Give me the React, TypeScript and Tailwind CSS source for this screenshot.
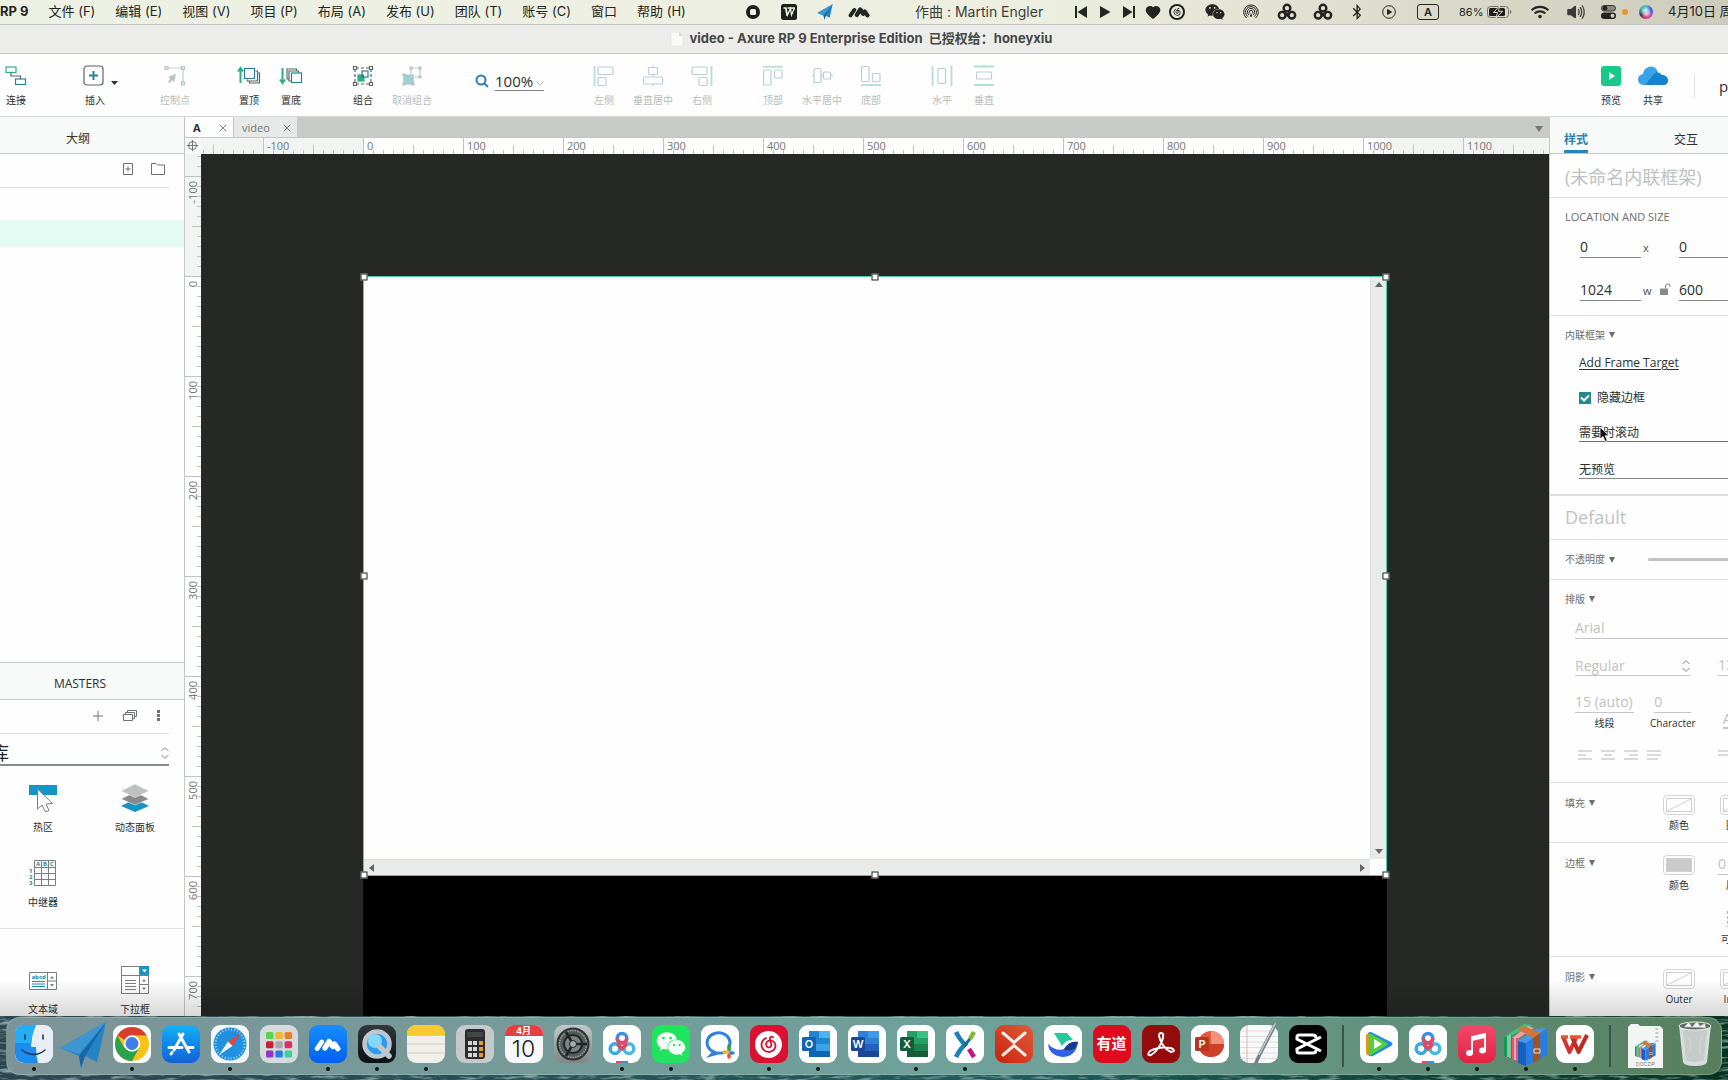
import { useLayoutEffect, useRef, useState } from 'react';
import type { ReactNode } from 'react';
import { Heart, X } from 'lucide-react';
import { FaBluetoothB, FaWeixin, FaWifi } from 'react-icons/fa';
import { IoVolumeHigh } from 'react-icons/io5';
import { SiNeteasecloudmusic } from 'react-icons/si';

const UI = "font-['Open_Sans','Noto_Sans_CJK_SC',sans-serif]";
const SYSTEM = "font-['Inter','Noto_Sans_CJK_SC',sans-serif]";

/* ---------- system menu bar ---------- */

const MENUS = [
  '文件 (F)',
  '编辑 (E)',
  '视图 (V)',
  '项目 (P)',
  '布局 (A)',
  '发布 (U)',
  '团队 (T)',
  '账号 (C)',
  '窗口',
  '帮助 (H)',
];

function PaperPlane({ className }: { className: string }) {
  return (
    <svg viewBox="0 0 48 48" className={className}>
      <path d="M1 27 47 1 38 41 26 35 22 47 20 35Z" fill="#2484c6" />
      <path d="M47 1 20 35 22 47 26 35Z" fill="#1766a5" />
      <path d="M1 27 47 1 20 33Z" fill="#3b96d2" />
    </svg>
  );
}

function Peaks({ className }: { className: string }) {
  return (
    <svg
      viewBox="0 0 26 16"
      className={className}
      fill="none"
      stroke="currentColor"
      strokeWidth="5"
      strokeLinejoin="round"
      strokeLinecap="round"
    >
      <path d="M3 12 7.500 5.500" strokeWidth="4.500" />
      <path d="M10.500 11.500 14.500 5 18 10 19.800 7.500 23 12" />
    </svg>
  );
}

function NetDisk({ className, color }: { className: string; color?: boolean }) {
  return (
    <svg viewBox="0 0 30 28" className={className} fill="none" strokeWidth="3.800" strokeLinecap="round">
      <circle cx="7.500" cy="19" r="5.200" stroke={color ? '#39a9e8' : 'currentColor'} />
      <circle cx="22.500" cy="19" r="5.200" stroke={color ? '#45b8ea' : 'currentColor'} />
      <circle cx="15" cy="8" r="5.200" stroke={color ? '#3c8fe4' : 'currentColor'} />
      <path d="M11 15 15 19 19 15" stroke={color ? '#e6455d' : 'currentColor'} />
      {color && <path d="M10 9a5.200 5.200 0 0 0 10 0" stroke="#e04b6a" />}
    </svg>
  );
}

function Cell({ w = 'w-9', children }: { w?: string; children: ReactNode }) {
  return <span className={`flex shrink-0 items-center justify-center ${w}`}>{children}</span>;
}

function MenuBar() {
  return (
    <header
      className={`flex h-6 shrink-0 items-center overflow-hidden bg-linear-to-r from-[#edf1e3] via-[#eceee0] via-60% to-[#cdccbc] text-[13px] whitespace-nowrap text-[#232521] ${SYSTEM}`}
    >
      <nav className="flex shrink-0 items-center gap-5">
        <button className="font-bold">RP 9</button>
        {MENUS.map(label => (
          <button key={label}>{label}</button>
        ))}
      </nav>
      <div className="flex-1" />
      <div className="flex shrink-0 items-center">
        <Cell>
          <svg viewBox="0 0 14 14" className="size-3.5">
            <circle cx="7" cy="7" r="7" fill="#1d1f1b" />
            <rect x="4" y="4" width="6" height="6" rx="1.500" fill="#eef0e4" />
          </svg>
        </Cell>
        <Cell>
          <svg viewBox="0 0 16 16" className="size-4">
            <rect width="16" height="16" rx="2.500" fill="#1d1f1b" />
            <path d="M2.500 4H5L6.500 11 9.500 4.500 10.500 11 13.500 4M6.500 4H14M4.500 4 6 12" fill="none" stroke="#eef0e4" strokeWidth="1.300" />
          </svg>
        </Cell>
        <Cell>
          <PaperPlane className="size-4" />
        </Cell>
        <Cell w="w-8">
          <Peaks className="h-3.5 w-[22px]" />
        </Cell>
        <span className="ml-10 w-[154px] text-sm text-[#3c3e38]">作曲 : Martin Engler</span>
        <Cell w="w-6">
          <svg viewBox="0 0 12 12" className="size-3" fill="currentColor">
            <path d="M0 0H2V12H0ZM12 0V12L2.500 6Z" />
          </svg>
        </Cell>
        <Cell w="w-6">
          <svg viewBox="0 0 12 12" className="size-3" fill="currentColor">
            <path d="M1 0V12L11.500 6Z" />
          </svg>
        </Cell>
        <Cell w="w-6">
          <svg viewBox="0 0 12 12" className="size-3" fill="currentColor">
            <path d="M12 0H10V12H12ZM0 0V12L9.500 6Z" />
          </svg>
        </Cell>
        <Cell w="w-6">
          <Heart className="size-4" fill="currentColor" />
        </Cell>
        <Cell w="w-6">
          <span className="flex size-4 items-center justify-center rounded-full bg-[#1d1f1b] text-[#e8e8dc]">
            <SiNeteasecloudmusic className="size-3" />
          </span>
        </Cell>
        <span className="w-2" />
        <Cell>
          <FaWeixin className="size-5" />
        </Cell>
        <Cell>
          <svg viewBox="0 0 16 16" className="size-4" fill="none" stroke="currentColor">
            <path d="M3.500 14a7.300 7.300 0 1 1 9 0M4.700 12.500a5.500 5.500 0 1 1 6.600 0M6 11a3.600 3.600 0 1 1 4 0" />
            <path d="M7 9.600a1.800 1.800 0 1 1 2 0" />
            <path d="M8 9.500 6.500 12.500H9.500Z" fill="currentColor" stroke="none" />
          </svg>
        </Cell>
        <Cell>
          <NetDisk className="h-[18px] w-5" />
        </Cell>
        <Cell>
          <NetDisk className="h-[18px] w-5" />
        </Cell>
        <Cell w="w-8">
          <FaBluetoothB className="size-4" />
        </Cell>
        <Cell w="w-8">
          <svg viewBox="0 0 14 14" className="size-3.5" fill="none" stroke="currentColor">
            <circle cx="7" cy="7" r="6.300" />
            <path d="M5.500 4.500V9.500L9.500 7Z" fill="currentColor" />
          </svg>
        </Cell>
        <span className="ml-3 flex h-4 w-[22px] items-center justify-center rounded-[3px] border border-[#232521] text-[11px] font-semibold">
          A
        </span>
        <span className="ml-5 w-7 text-[11px]">86%</span>
        <svg viewBox="0 0 25 12" className="h-3 w-[25px]">
          <rect x=".5" y=".5" width="21" height="11" rx="3" fill="none" stroke="#6d6e66" />
          <rect x="2" y="2" width="16" height="8" rx="1.500" fill="#1d1f1b" />
          <path d="M12.500 0 6.500 6.500H10.500L9 12 15.500 5.300H11.500Z" fill="#1d1f1b" stroke="#dddccd" />
          <path d="M23 4v4q1.500-.5 1.500-2T23 4" fill="#6d6e66" />
        </svg>
        <span className="w-2.5" />
        <Cell>
          <FaWifi className="size-[18px]" />
        </Cell>
        <Cell>
          <IoVolumeHigh className="size-5 text-[#3a3b36]" />
        </Cell>
        <Cell w="w-7">
          <svg viewBox="0 0 15 14" className="h-3.5 w-[15px]">
            <rect x=".5" y=".5" width="14" height="5.500" rx="2.700" fill="#8b8c82" stroke="#33342f" />
            <circle cx="4" cy="3.200" r="2.400" fill="#22231f" />
            <rect x="0" y="7.500" width="15" height="6.500" rx="3.200" fill="#22231f" />
            <circle cx="11.500" cy="10.700" r="2" fill="#d0cfc0" />
          </svg>
        </Cell>
        <span className="size-1.5 rounded-full bg-[#e8962b]" />
        <Cell>
          <span className="size-3.5 rounded-full bg-[conic-gradient(#43c3c9,#3b4fd0,#a94ec2,#e23f7d,#3b2b54,#35b0a8,#43c3c9)] p-[3px]">
            <span className="block size-2 rounded-full bg-white/70 blur-[1px]" />
          </span>
        </Cell>
        <span className="ml-1 w-[60px] shrink-0 overflow-hidden text-[13px]">4月10日 周六</span>
      </div>
    </header>
  );
}

/* ---------- toolbar ---------- */

const DARK = '#5b6865';
const GREEN = '#2fae86';
const BLUE = '#2d7f9c';
const PALE = '#b4dfd4';
const PALE2 = '#b9d0da';

function Tool({
  label,
  w = 'w-[42px]',
  disabled,
  children,
}: {
  label: string;
  w?: string;
  disabled?: boolean;
  children: ReactNode;
}) {
  return (
    <button
      disabled={disabled}
      className={`flex shrink-0 flex-col items-center gap-2 text-[10px] leading-3 whitespace-nowrap ${w} ${disabled ? 'text-[#b9bdba]' : 'text-[#2c302e]'}`}
    >
      <svg viewBox="0 0 20 20" className="h-5 w-5 overflow-visible" fill="none" strokeWidth="1.200">
        {children}
      </svg>
      {label}
    </button>
  );
}

function Toolbar() {
  return (
    <div className={`flex h-[63px] shrink-0 items-center overflow-hidden border-b border-[#d5d9d6] bg-[#fdfefd] pt-0.5 ${UI}`}>
      <Tool label="连接" w="w-8">
        <rect x="0" y="1" width="10" height="5.500" stroke={GREEN} />
        <rect x="9.500" y="13" width="10" height="5.500" stroke={BLUE} />
        <path d="M5 6.500V10H14.500V13" stroke={DARK} />
      </Tool>
      <div className="ml-[35px]">
        <Tool label="插入" w="w-14">
          <rect x="-1" y="0" width="19" height="19" rx="3" stroke={DARK} />
          <path d="M8.500 5V14M4 9.500H13" stroke={BLUE} strokeWidth="2" />
          <path d="M26 15H33L29.500 19Z" fill="#2c302e" />
        </Tool>
      </div>
      <div className="ml-[31px]">
        <Tool label="控制点" disabled>
          <path d="M2 2H18V18" stroke="#c7c9cd" />
          <path d="M0 .5H3V3.500H0ZM16.500.5H19.500V3.500H16.500ZM16.500 16H19.500V19H16.500Z" stroke="#b9c4cc" fill="#e3eaee" />
          <path d="M11 8 3 11 5.500 12.500 3 15.500 4.500 17 7.500 14 9 16.500Z" fill="#b9bfc0" />
        </Tool>
      </div>
      <div className="ml-8 flex">
        <Tool label="置顶">
          <path d="M1.500 17V3M-1 5.500 1.500 2 4 5.500" stroke={GREEN} strokeWidth="2" />
          <rect x="5.500" y="2.500" width="10" height="10" stroke={BLUE} />
          <path d="M16.500 5H18.500V15H8.500V13.500M18.500 7H20.500V17H10.500V15.500" stroke={DARK} />
        </Tool>
        <Tool label="置底">
          <path d="M1.500 2V16M-1 13.500 1.500 17 4 13.500" stroke={GREEN} strokeWidth="2" />
          <path d="M8 13H6V3H15.500V4.500M10 15H8V5H17.500V6.500" stroke={DARK} />
          <rect x="10.500" y="7" width="10" height="9.500" stroke={BLUE} />
        </Tool>
      </div>
      <div className="ml-[30px] flex">
        <Tool label="组合">
          <path d="M3 2H17M3 18H17M2 3V17M18 3V17" stroke={DARK} strokeDasharray="3 2" />
          <path d="M.5.5H3.500V3.500H.5ZM16.500.5H19.500V3.500H16.500ZM.5 16.500H3.500V19.500H.5ZM16.500 16.500H19.500V19.500H16.500Z" stroke={DARK} fill="#fff" />
          <rect x="5" y="9" width="6" height="6" fill={GREEN} stroke={GREEN} />
          <rect x="9" y="5" width="6" height="6" stroke={BLUE} fill="#fff" />
          <path d="M8.500 8.500H11V11.500H8.500Z" fill={BLUE} />
        </Tool>
        <Tool label="取消组合" w="w-14" disabled>
          <path d="M2 9H11V18H2Z" fill="#9fd2cf" stroke="#9fc5cc" />
          <path d="M9 2H18V11H9Z" stroke="#bcd0d5" />
          <path d="M8 1H10V3H8ZM17 1H19V3H17ZM17 10H19V12H17ZM1 8H3V10H1ZM1 17H3V19H1ZM10 17H12V19H10Z" stroke="#b5bfc3" />
        </Tool>
      </div>
      <div className="mb-2.5 ml-[35px] flex h-5 items-center">
        <svg viewBox="0 0 14 14" className="size-3.5" fill="none" stroke="#2b7fb4" strokeWidth="2">
          <circle cx="6" cy="6" r="4.500" />
          <path d="M9.500 9.500 13 13" />
        </svg>
        <label className="ml-1.5 flex h-5 items-center border-b border-[#7f8582]">
          <input aria-label="缩放" defaultValue="100%" className="w-[41px] bg-transparent text-[15px] leading-5 text-[#2c302e] outline-none" />
          <svg viewBox="0 0 8 5" className="mt-1.5 h-[5px] w-2" fill="none" stroke="#b4b8b5">
            <path d="M.5.5 4 4 7.500.5" />
          </svg>
        </label>
      </div>
      <div className="ml-[39px] flex">
        <Tool label="左侧" disabled>
          <path d="M.5 0V20" stroke={PALE} strokeWidth="1.800" />
          <rect x="4" y="1" width="15" height="7.500" rx="1" stroke={PALE2} />
          <rect x="4" y="11.500" width="8" height="8" rx="1" stroke={PALE2} />
        </Tool>
        <Tool label="垂直居中" w="w-14" disabled>
          <path d="M10-.5V1.500M10 8.500V11M10 18V20.500" stroke={PALE} />
          <rect x="5.500" y="1.500" width="9" height="7" rx="1" stroke={PALE2} />
          <rect x=".5" y="11" width="19" height="7" rx="1" stroke={PALE2} />
        </Tool>
        <Tool label="右侧" disabled>
          <path d="M19.500 0V20" stroke={PALE} strokeWidth="1.800" />
          <rect x="0" y="1" width="15" height="7.500" rx="1" stroke={PALE2} />
          <rect x="7" y="11.500" width="8" height="8" rx="1" stroke={PALE2} />
        </Tool>
      </div>
      <div className="ml-[29px] flex">
        <Tool label="顶部" disabled>
          <path d="M0 .7H20" stroke={PALE} strokeWidth="1.800" />
          <rect x=".5" y="4" width="7.500" height="15" rx="1" stroke={PALE2} />
          <rect x="11.500" y="4" width="7.500" height="8" rx="1" stroke={PALE2} />
        </Tool>
        <Tool label="水平居中" w="w-14" disabled>
          <path d="M0 9.500H2M9 9.500H11.500M19 9.500H21" stroke={PALE} strokeWidth="1.500" />
          <rect x="2" y="2.500" width="7" height="14" rx="1" stroke={PALE2} />
          <rect x="11.500" y="6" width="7" height="7" rx="1" stroke={PALE2} />
        </Tool>
        <Tool label="底部" disabled>
          <path d="M0 19H20" stroke={PALE} strokeWidth="1.800" />
          <rect x=".5" y=".5" width="7.500" height="15" rx="1" stroke={PALE2} />
          <rect x="11.500" y="7.500" width="7.500" height="8" rx="1" stroke={PALE2} />
        </Tool>
      </div>
      <div className="ml-[29px] flex">
        <Tool label="水平" disabled>
          <path d="M.5 0V20M19.500 0V20" stroke={PALE} strokeWidth="1.800" />
          <rect x="6" y="2.500" width="7.500" height="15" rx="1" stroke={PALE2} />
        </Tool>
        <Tool label="垂直" disabled>
          <path d="M0 .5H20M0 19H20" stroke={PALE} strokeWidth="1.800" />
          <rect x="2.500" y="6" width="15" height="7" rx="1" stroke={PALE2} />
        </Tool>
      </div>
      <div className="flex-1" />
      <Tool label="预览">
        <rect width="20" height="20" rx="3" fill="#18ca8a" />
        <path d="M8 6V14L14 10Z" fill="#fff" />
      </Tool>
      <Tool label="共享">
        <path d="M0 19Q-5 18-5 13.500T0 8Q1 1 8 .5 14 1 15 7 17 6 19 9 24 9 25 14 25 19 20 19Z" fill="#37a4ea" />
        <path d="M2 19 11 8Q15 4 18 9 24 9 25 14 25 19 20 19Z" fill="#1583cf" />
      </Tool>
      <div className="ml-5 h-6 w-px bg-[#dfe2e0]" />
      <span className="ml-6 w-[9px] overflow-hidden text-[15px] text-[#2c302e]">p</span>
    </div>
  );
}

/* ---------- left column: outline, masters, widget library ---------- */

function StepArrows() {
  return (
    <svg viewBox="0 0 8 12" className="h-3 w-2" fill="none" stroke="#b4b8b5" strokeWidth="1.200">
      <path d="M.5 4 4 .7 7.500 4M.5 8 4 11.300 7.500 8" />
    </svg>
  );
}

function Widget({ label, children }: { label: string; children: ReactNode }) {
  return (
    <li className="flex w-[86px] flex-col items-center gap-2 text-[10px] leading-3.5 text-[#2c302e]">
      <svg viewBox="0 0 28 28" className="size-7" fill="none" stroke="#7a7e7c">
        {children}
      </svg>
      {label}
    </li>
  );
}

function LeftPanel() {
  return (
    <aside className={`flex w-[185px] shrink-0 flex-col overflow-hidden border-r border-[#c4c8c5] bg-[#fdfefd] ${UI}`}>
      <h2 className="flex h-[37px] shrink-0 items-center justify-center border-b border-[#c4c8c5] bg-[#f7faf9] pt-2 pr-7 text-xs text-[#2c302e]">
        大纲
      </h2>
      <div className="mr-[15px] flex h-[34px] shrink-0 items-center justify-end gap-[18px] border-b border-[#dcdfdd] pr-1 pb-1">
        <button aria-label="添加页面">
          <svg viewBox="0 0 10 12" className="h-3 w-2.5" fill="none" stroke="#6e7270">
            <path d="M.5.5H9.500V11.500H.5ZM5 3.500V8.500M2.500 6H7.500" />
          </svg>
        </button>
        <button aria-label="添加文件夹">
          <svg viewBox="0 0 14 12" className="h-3 w-3.5" fill="none" stroke="#6e7270">
            <path d="M.5.5H5L6.500 2H13.500V11.500H.5Z" />
          </svg>
        </button>
      </div>
      <div className="mt-8 h-[27px] shrink-0 bg-[#e4fbf3]" />
      <div className="flex-1" />

      <h2 className="flex h-[38px] shrink-0 items-center justify-center border-y border-[#c4c8c5] bg-[#f7faf9] pt-1.5 pr-6 text-xs text-[#2c302e]">
        MASTERS
      </h2>
      <div className="mr-[15px] flex h-[34px] shrink-0 items-center justify-end gap-5 border-b border-[#dcdfdd] pr-[9px] pb-0.5">
        <button aria-label="添加母版">
          <svg viewBox="0 0 10 10" className="size-2.5" stroke="#6e7270">
            <path d="M0 5H10M5 0V10" />
          </svg>
        </button>
        <button aria-label="母版分组">
          <svg viewBox="0 0 14 11" className="h-[11px] w-3.5" fill="none" stroke="#6e7270">
            <path d="M.5 4.500H9.500V10.500H.5ZM2.500 4.500V2.500H11.500V8.500H9.500M4.500 2.500V.5H13.500V6.500H11.500" />
          </svg>
        </button>
        <button aria-label="更多">
          <svg viewBox="0 0 3 11" className="h-[11px] w-[3px]" fill="#6e7270">
            <path d="M0 0H3V3H0ZM0 4H3V7H0ZM0 8H3V11H0Z" />
          </svg>
        </button>
      </div>
      <label className="mr-[15px] flex h-8 shrink-0 items-center border-b-2 border-[#868a88] pt-2">
        <select aria-label="元件库" className="-ml-[9px] flex-1 appearance-none bg-transparent text-lg leading-6 text-[#1f2221] outline-none">
          <option>库</option>
        </select>
        <StepArrows />
      </label>

      <ul className="flex shrink-0 flex-wrap gap-x-1.5 gap-y-[25px] border-b border-[#dcdfdd] pt-[18px] pb-[19px]">
        <Widget label="热区">
          <path d="M0 1H28V11H0Z" fill="#1793c5" stroke="none" />
          <path d="M8.500 5V25L13 21 16.500 28 20 26.500 17 20 23.500 19.500Z" fill="#fff" />
        </Widget>
        <Widget label="动态面板">
          <path d="M14 15 28 22 14 28 0 22Z" fill="#1793c5" stroke="none" />
          <path d="M14 8 28 15 14 21 0 15Z" fill="#868988" stroke="#fdfefd" strokeWidth=".5" />
          <path d="M14 0 28 7 14 13.500 0 7Z" fill="#bfc1c0" stroke="#fdfefd" strokeWidth=".5" />
        </Widget>
        <Widget label="中继器">
          <path d="M5.500 1.500H26.500V26.500H5.500ZM5.500 8.500H26.500M5.500 14.500H26.500M5.500 20.500H26.500M12.500 1.500V26.500M19.500 1.500V26.500" />
          <g fill="#1c86a8" stroke="none" className="text-[6px] font-bold">
            <text x="7" y="7">A</text>
            <text x="14" y="7">B</text>
            <text x="21" y="7">C</text>
            <text x="0" y="14">1</text>
            <text x="0" y="20">2</text>
            <text x="0" y="26">3</text>
          </g>
        </Widget>
      </ul>
      <ul className="flex shrink-0 flex-wrap gap-x-1.5 pt-[37px]">
        <Widget label="文本域">
          <path d="M.5 6.500H27.500V23.500H.5ZM18.500 6.500V23.500M18.500 15H27.500" />
          <path d="M3 15.500H16M3 18H16M3 20.500H16" stroke="#1793c5" />
          <path d="M21 12.500 23 10 25 12.500ZM21 18 23 20.500 25 18Z" fill="#7a7e7c" stroke="none" />
          <text x="2.500" y="13" fill="#1c86a8" stroke="none" className="text-[6px] font-bold">
            abcd
          </text>
        </Widget>
        <Widget label="下拉框">
          <path d="M.5.5H27.500V27.500H.5ZM.5 9.500H27.500M18.500.5V27.500M18.500 18.500H27.500M4 14.500H15M4 17.500H15M4 20.500H15M4 23.500H15" />
          <path d="M19 0H28V9H19Z" fill="#1793c5" stroke="none" />
          <path d="M21 3.500H26L23.500 6.500Z" fill="#fff" stroke="none" />
          <path d="M21 15.500 23 13 25 15.500ZM21 21.500 23 24 25 21.500Z" fill="#7a7e7c" stroke="none" />
        </Widget>
      </ul>
    </aside>
  );
}

/* ---------- rulers and canvas ---------- */

// canvas origin measured from the corner where the two rulers meet
const ORIGIN_X = 162;
const ORIGIN_Y = 122;
const PAGE_W = 1024;
const FRAME_H = 600;

// room a label needs past its tick
const LABEL_ROOM = 36;

/** Pixel size of an svg, so that a ruler only draws the marks it has room for. */
function useSvgSize() {
  const ref = useRef<SVGSVGElement>(null);
  const [size, setSize] = useState({ width: 0, height: 0 });

  useLayoutEffect(() => {
    const node = ref.current;
    if (!node) return;
    const measure = () => {
      const box = node.getBoundingClientRect();
      setSize({ width: box.width, height: box.height });
    };
    measure();
    const observer = new ResizeObserver(measure);
    observer.observe(node);
    return () => observer.disconnect();
  }, []);

  return { ref, ...size };
}

function ticks(from: number, to: number) {
  const list: number[] = [];
  for (let n = from; n <= to; n += 10) list.push(n);
  return list;
}

function tickStart(n: number) {
  if (n % 100 === 0) return 0;
  return n % 50 === 0 ? 7 : 12;
}

function TopRuler() {
  const { ref, width } = useSvgSize();
  const end = width - ORIGIN_X;

  return (
    <svg ref={ref} className="h-4 min-w-0 flex-1 bg-[#f1f4f2]">
      <rect x={ORIGIN_X} width={PAGE_W} height="16" fill="#fdfefd" />
      {ticks(-160, end).map(n => (
        <g key={n}>
          <path d={`M${ORIGIN_X + n + 0.5} ${tickStart(n)}V16`} stroke="#bfc3c0" />
          {n % 100 === 0 && n + LABEL_ROOM < end && (
            <text x={ORIGIN_X + n + 4} y="12" fill="#737775" className="text-[11px]">
              {n}
            </text>
          )}
        </g>
      ))}
    </svg>
  );
}

function SideRuler() {
  const { ref, height } = useSvgSize();
  const end = height - ORIGIN_Y;

  return (
    <svg ref={ref} className="w-4 shrink-0 bg-[#f1f4f2]">
      <rect y={ORIGIN_Y} width="16" height="100%" fill="#fdfefd" />
      {ticks(-120, end).map(n => (
        <g key={n}>
          <path d={`M${tickStart(n)} ${ORIGIN_Y + n + 0.5}H16`} stroke="#bfc3c0" />
          {n % 100 === 0 && n + LABEL_ROOM < end && (
            <text
              textAnchor="end"
              transform={`translate(12 ${ORIGIN_Y + n + 5}) rotate(-90)`}
              fill="#737775"
              className="text-[11px]"
            >
              {n}
            </text>
          )}
        </g>
      ))}
    </svg>
  );
}

const HANDLES = [
  'left-0 top-0',
  'left-1/2 top-0',
  'left-full top-0',
  'left-0 top-1/2',
  'left-full top-1/2',
  'left-0 top-full',
  'left-1/2 top-full',
  'left-full top-full',
];

function Triangle({ d }: { d: string }) {
  return (
    <svg viewBox="0 0 10 10" className="size-2.5" fill="#626664">
      <path d={d} />
    </svg>
  );
}

function Canvas() {
  return (
    <div className="relative min-w-0 flex-1 overflow-hidden bg-[#262826]">
      <div className="absolute top-[122px] bottom-0 left-[162px] w-[1024px] bg-black" />
      <div
        className="absolute top-[122px] left-[162px] border border-[#4cc9b1] bg-[#fdfefd]"
        style={{ width: PAGE_W, height: FRAME_H }}
      >
        <div className="flex h-full flex-col">
          <div className="flex flex-1">
            <div className="flex-1" />
            <div className="flex w-4 flex-col items-center justify-between border-l border-[#dadddb] bg-[#e9ebe9] py-0.5">
              <Triangle d="M1 8 5 3 9 8Z" />
              <Triangle d="M1 2H9L5 7Z" />
            </div>
          </div>
          <div className="flex h-4">
            <div className="flex flex-1 items-center justify-between border-t border-[#dadddb] bg-[#e9ebe9] px-0.5">
              <Triangle d="M8 1V9L3 5Z" />
              <Triangle d="M2 1V9L7 5Z" />
            </div>
            <div className="w-4" />
          </div>
        </div>
        {HANDLES.map(pos => (
          <span key={pos} className={`absolute size-[7px] -translate-1/2 border border-[#222] bg-white ${pos}`} />
        ))}
      </div>
    </div>
  );
}

function Workspace() {
  return (
    <main className={`flex min-w-0 flex-1 flex-col ${UI}`}>
      <div className="flex h-5 shrink-0 items-stretch bg-[#c8cac8] text-[11px]">
        <div className="flex w-[49px] items-center justify-between border-r border-[#c4c8c5] bg-[#fdfefd] pt-0.5 pr-1 pl-2">
          <button className="font-bold text-[#2c302e]">A</button>
          <button aria-label="关闭 A">
            <X className="size-3 text-[#555957]" strokeWidth={1.5} />
          </button>
        </div>
        <div className="flex w-[63px] items-center justify-between bg-[#e6e9e7] pt-0.5 pr-1 pl-2 text-[#737775]">
          <button>video</button>
          <button aria-label="关闭 video">
            <X className="size-3 text-[#555957]" strokeWidth={1.5} />
          </button>
        </div>
        <button aria-label="所有标签" className="ml-auto pr-1.5">
          <svg viewBox="0 0 8 6" className="mt-1 h-1.5 w-2">
            <path d="M0 0H8L4 6Z" fill="#737775" />
          </svg>
        </button>
      </div>
      <div className="flex h-[17px] shrink-0 border-t border-[#c4c8c5]">
        <svg viewBox="0 0 16 16" className="size-4 shrink-0 bg-[#f7faf9]" fill="none" stroke="#737775">
          <circle cx="7.500" cy="7.500" r="4" />
          <path d="M7.500 2V13M2 7.500H13" />
        </svg>
        <TopRuler />
      </div>
      <div className="flex min-h-0 flex-1">
        <SideRuler />
        <Canvas />
      </div>
    </main>
  );
}

/* ---------- right column: style inspector ---------- */

function SectionTitle({ children }: { children: ReactNode }) {
  return (
    <h3 className="flex h-4 shrink-0 items-center gap-1 text-[10px] whitespace-nowrap text-[#6b6f6d]">
      {children}
      <svg viewBox="0 0 6 6" className="size-1.5" fill="#6b6f6d">
        <path d="M0 0H6L3 6Z" />
      </svg>
    </h3>
  );
}

function Field({ label, value, w, muted }: { label: string; value: string; w: string; muted?: boolean }) {
  return (
    <input
      aria-label={label}
      defaultValue={value}
      className={`h-5 shrink-0 border-b bg-transparent pb-0.5 text-sm outline-none ${w} ${muted ? 'border-[#c4c7c5] text-[#c0c3c1]' : 'border-[#868a88] text-[#2c302e]'}`}
    />
  );
}

function Swatch({ label, filled }: { label: string; filled?: boolean }) {
  return (
    <button className="flex h-10 w-8 shrink-0 flex-col items-center gap-[3px] text-[10px] leading-3.5 text-[#2c302e]">
      <span className="flex h-5 w-8 items-center justify-center rounded-sm border border-[#d3d6d4]">
        <svg viewBox="0 0 26 14" className="h-3.5 w-[26px]" stroke="#cfd1d0" fill={filled ? '#c9cac9' : 'none'}>
          <rect x=".5" y=".5" width="25" height="13" />
          {!filled && <path d="M1 13 25 1" />}
        </svg>
      </span>
      {label}
    </button>
  );
}

const ALIGNMENTS = [
  { label: '左对齐', d: 'M0 1H14M0 5H8M0 9H14' },
  { label: '居中', d: 'M0 1H14M3 5H11M0 9H14' },
  { label: '右对齐', d: 'M0 1H14M5 5H14M0 9H14' },
  { label: '两端对齐', d: 'M0 1H14M0 5H14M0 9H11' },
];

function RightPanel() {
  return (
    <aside className={`relative w-[179px] shrink-0 overflow-hidden border-l border-[#c4c8c5] bg-[#fdfefd] ${UI}`}>
      <div className="flex h-[37px] w-[240px] items-end border-b border-[#c4c8c5] bg-[#f7faf9] pl-3.5 text-xs text-[#2c302e]">
        <button className="border-b-3 border-[#2b83b4] pb-0.5 font-bold text-[#2b83b4]">样式</button>
        <button className="ml-[86px] pb-[5px]">交互</button>
      </div>
      <div className="flex h-11 w-[240px] items-center border-b border-[#dcdfdd] pt-0.5 pl-[15px]">
        <input aria-label="名称" placeholder="(未命名内联框架)" className="w-full bg-transparent text-lg outline-none placeholder:text-[#c0c3c1]" />
      </div>

      <section className="w-[240px] border-b border-[#dcdfdd] pt-[11px] pb-3.5 pl-[15px]">
        <h3 className="text-[11px] leading-4 text-[#6b6f6d]">LOCATION AND SIZE</h3>
        <div className="mt-[13px] flex pl-[15px]">
          <Field label="x" value="0" w="w-[61px]" />
          <span className="w-[38px] pl-0.5 text-[11px] leading-5 text-[#4a4e4c]">x</span>
          <Field label="y" value="0" w="w-[61px]" />
        </div>
        <div className="mt-[23px] flex pl-[15px]">
          <Field label="w" value="1024" w="w-[61px]" />
          <span className="flex w-[38px] items-center gap-2 pl-0.5 text-[11px] leading-5 text-[#4a4e4c]">
            w
            <svg viewBox="0 0 11 12" className="mb-1 h-3 w-[11px]">
              <path d="M0 5.500H8V12H0Z" fill="#868a88" />
              <path d="M5.500 5.500V3Q5.500 1 7.800 1T10 3V4" fill="none" stroke="#868a88" />
            </svg>
          </span>
          <Field label="h" value="600" w="w-[61px]" />
        </div>
      </section>

      <section className="w-[240px] border-b-2 border-[#dcdfdd] pt-[11px] pb-[15px] pl-[15px]">
        <SectionTitle>内联框架</SectionTitle>
        <div className="flex flex-col items-start pl-3.5 text-xs text-[#2c302e]">
          <a href="#target" className="mt-2.5 leading-5 underline underline-offset-2">
            Add Frame Target
          </a>
          <label className="mt-[15px] flex h-5 items-center gap-1.5">
            <span className="grid size-3">
              <input type="checkbox" defaultChecked className="col-start-1 row-start-1 size-3 appearance-none bg-[#23898c]" />
              <svg viewBox="0 0 12 12" className="pointer-events-none col-start-1 row-start-1 size-3" fill="none" stroke="#fff" strokeWidth="2">
                <path d="M2 5.500 5 8.500 10 3.500" />
              </svg>
            </span>
            隐藏边框
          </label>
          <select aria-label="滚动条" className="mt-3.5 h-5 w-full appearance-none border-b border-[#3b7f9b] bg-transparent pt-0.5 outline-none">
            <option>需要时滚动</option>
          </select>
          <select aria-label="预览图" className="mt-[17px] h-5 w-full appearance-none border-b border-[#868a88] bg-transparent pt-0.5 outline-none">
            <option>无预览</option>
          </select>
        </div>
      </section>

      <div className="flex h-11 w-[240px] items-center border-b border-[#dcdfdd] pb-0.5 pl-[15px]">
        <select aria-label="样式" className="w-full appearance-none bg-transparent text-lg text-[#c0c3c1] outline-none">
          <option>Default</option>
        </select>
      </div>
      <section className="flex h-10 w-[240px] items-center border-b border-[#dcdfdd] pl-[15px]">
        <SectionTitle>不透明度</SectionTitle>
        <input
          type="range"
          aria-label="不透明度"
          defaultValue="100"
          className="ml-[33px] h-[3px] w-32 appearance-none rounded-full bg-[#c0c3c1]"
        />
      </section>

      <section className="h-[203px] w-[240px] border-b border-[#dcdfdd] pt-[11px] pl-[15px]">
        <SectionTitle>排版</SectionTitle>
        <div className="mt-3 flex pl-2.5">
          <Field label="字体" value="Arial" w="w-[200px]" muted />
        </div>
        <div className="mt-[17px] flex pl-2.5">
          <label className="flex h-5 w-[115px] items-center border-b border-[#c4c7c5]">
            <select aria-label="字形" className="flex-1 appearance-none bg-transparent text-sm leading-5 text-[#c0c3c1] outline-none">
              <option>Regular</option>
            </select>
            <StepArrows />
          </label>
          <span className="w-7" />
          <Field label="字号" value="13" w="w-12" muted />
        </div>
        <div className="mt-[17px] flex pl-2.5">
          <label className="flex flex-col items-center text-[10px] leading-5 text-[#2c302e]">
            <Field label="线段" value="15 (auto)" w="w-[59px]" muted />
            线段
          </label>
          <label className="ml-4 flex flex-col items-center text-[10px] leading-5 text-[#2c302e]">
            <Field label="Character" value="0" w="w-[37px]" muted />
            Character
          </label>
          <button className="mt-4 ml-[27px] h-5 border-b-2 border-[#c4c7c5] text-sm leading-5 text-[#c0c3c1]">A</button>
        </div>
        <div className="mt-[17px] flex gap-[9px] pl-[13px]">
          {ALIGNMENTS.map(({ label, d }) => (
            <button key={label} aria-label={label}>
              <svg viewBox="0 0 14 10" className="h-2.5 w-3.5" stroke="#cdd0ce" strokeWidth="1.500">
                <path d={d} />
              </svg>
            </button>
          ))}
          <button aria-label="顶端对齐" className="ml-12">
            <svg viewBox="0 0 14 10" className="h-2.5 w-3.5" stroke="#cdd0ce" strokeWidth="1.500">
              <path d="M0 1H14M0 5H14" />
            </svg>
          </button>
        </div>
      </section>

      <section className="flex h-[60px] w-[260px] border-b border-[#dcdfdd] pt-3 pl-[15px]">
        <div className="w-[98px]">
          <SectionTitle>填充</SectionTitle>
        </div>
        <Swatch label="颜色" />
        <span className="w-[25px]" />
        <Swatch label="图片" />
      </section>
      <section className="flex h-[114px] w-[260px] border-b border-[#dcdfdd] pt-3 pl-[15px]">
        <div className="w-[98px]">
          <SectionTitle>边框</SectionTitle>
        </div>
        <Swatch label="颜色" filled />
        <div className="ml-[23px] flex w-9 flex-col items-center text-[10px] leading-5 text-[#2c302e]">
          <Field label="厚度" value="0" w="w-9" muted />
          <span>厚度</span>
          <svg viewBox="0 0 18 16" className="mt-4 h-4 w-[18px] shrink-0" stroke="#b4b8b5" strokeWidth="2" strokeDasharray="3 2">
            <path d="M1 0V16M0 1H18" />
          </svg>
          <span className="mt-0.5 whitespace-nowrap">可见性</span>
        </div>
      </section>
      <section className="flex w-[260px] pt-3 pl-[15px]">
        <div className="w-[98px]">
          <SectionTitle>阴影</SectionTitle>
        </div>
        <Swatch label="Outer" />
        <span className="w-[25px]" />
        <Swatch label="Inner" />
      </section>

      {/* mouse pointer */}
      <svg viewBox="0 0 11 17" className="absolute top-[309px] left-[49px] h-[17px] w-[11px]">
        <path d="M1 1V13L4 10.500 6 15.500 8.300 14.500 6.300 9.700H10Z" fill="#111" stroke="#fff" strokeWidth=".8" />
      </svg>
    </aside>
  );
}

/* ---------- dock ---------- */

function Tile({ bg, running, children }: { bg: string; running?: boolean; children: ReactNode }) {
  return (
    <button className="flex w-[49px] shrink-0 flex-col items-center gap-1">
      <span className={`flex size-[38px] items-center justify-center overflow-hidden rounded-[9px] ${bg}`}>{children}</span>
      <span className={`size-1 rounded-full ${running ? 'bg-[#0d1615]' : ''}`} />
    </button>
  );
}

function Art({ children }: { children: ReactNode }) {
  return (
    <svg viewBox="0 0 38 38" className="size-[38px] overflow-visible" fill="none">
      {children}
    </svg>
  );
}

function OfficeIcon({ letter, tones }: { letter: string; tones: string[] }) {
  return (
    <Art>
      <path d="M10 6H31V32H10Z" fill={tones[0]} />
      <path d="M20 6H31V13H20Z" fill={tones[1]} />
      <path d="M10 19H31V32H10Z" fill={tones[2]} />
      <path d="M10 26H31V32H10Z" fill={tones[3]} />
      <rect x="3" y="12" width="14" height="14" rx="1.500" fill={tones[3]} />
      <text x="10" y="23" textAnchor="middle" fill="#fff" className="text-[11px] font-semibold">
        {letter}
      </text>
    </Art>
  );
}

function Books() {
  return (
    <>
      <path d="M0 12 8 8V34L0 31Z" fill="#139a54" />
      <path d="M0 12 20-1 29 0 8 10Z" fill="#3cc47c" />
      <path d="M8 14 15 10V37L8 34Z" fill="#e0596f" />
      <path d="M8 13 24 1 30 3 15 13Z" fill="#f0a0ad" />
      <path d="M14 16 22 18V41L14 38Z" fill="#1560c0" />
      <path d="M14 16 32 4 43 3 22 18Z" fill="#4a97ee" />
      <path d="M22 18 43 4V30L22 41Z" fill="#2a7de0" />
      <path d="M29 13 36 8V34L29 38Z" fill="#a4501f" />
      <path d="M13 4 20 1 36 8 29 13Z" fill="#d0763a" />
      <path d="M30 24H36V28H30Z" stroke="#f5e2c8" />
      <path d="M4 11V32M6 10V33M11 13V35" stroke="#eef2ee" />
    </>
  );
}

function DockDivider() {
  return <span className="mx-[10px] h-[42px] w-0.5 shrink-0 bg-[#3a544c]" />;
}

function Dock() {
  return (
    <footer
      className={`relative mx-1.5 mt-px mb-[5px] flex h-[58px] shrink-0 items-start justify-center overflow-hidden rounded-[14px] border border-white/20 bg-linear-to-r from-[#7c9498] via-[#6da19a] via-60% to-[#577f5e] pt-[7px] ${SYSTEM}`}
    >
      <Tile bg="bg-white" running>
        <Art>
          <path d="M0 0H38V38H0Z" fill="#e9edf5" />
          <path d="M0 0H21Q16 10 16 22H21Q21 31 23 38H0Z" fill="#1c8df0" />
          <path d="M0 0H21Q17 8 16.500 18H0Z" fill="#25aef6" />
          <path d="M10 10V14M28 10V14M7 25Q19 34 30 25" stroke="#16304a" strokeWidth="1.500" strokeLinecap="round" />
        </Art>
      </Tile>
      <button aria-label="Telegram" className="-mt-1 flex w-[49px] shrink-0 justify-center">
        <PaperPlane className="size-12" />
      </button>
      <Tile bg="bg-white" running>
        <Art>
          <circle cx="19" cy="19" r="17" fill="#fbc116" />
          <path d="M19 19 4.300 10.500A17 17 0 0 1 33.700 10.500H19Z" fill="#dd3b2e" />
          <path d="M4.300 10.500A17 17 0 0 0 19 36L26 23 19 19 11.500 23Z" fill="#2ba24c" />
          <circle cx="19" cy="18.500" r="8.200" fill="#fff" />
          <circle cx="19" cy="18.500" r="6.500" fill="#3f7fe8" />
        </Art>
      </Tile>
      <Tile bg="bg-linear-to-b from-[#1ab0f4] to-[#1560dc]">
        <Art>
          <path d="M21 9 12 25M17 9 27 27M7 22.500H20M25 22.500H31M10 27.500 9 29" stroke="#f4f9ff" strokeWidth="3" strokeLinecap="round" />
        </Art>
      </Tile>
      <Tile bg="bg-[#f4f6f7]" running>
        <Art>
          <circle cx="19" cy="19" r="16.500" fill="#2190e0" />
          <circle cx="19" cy="19" r="14.500" stroke="#a9d6f5" strokeDasharray="1 2" strokeWidth="2" />
          <path d="M30 8 21.500 21 17 16.500Z" fill="#e2463c" />
          <path d="M8 30 17 16.500 21.500 21Z" fill="#f3f5f7" />
        </Art>
      </Tile>
      <Tile bg="bg-[#d5dbdc]">
        <Art>
          {['#56d34f', '#f3b62c', '#e88224', '#c8202e', '#a9a9a9', '#e12d66', '#9535c9', '#2a7ce0', '#3fcf9c'].map((fill, i) => (
            <rect key={fill} x={6 + (i % 3) * 9.3} y={7 + Math.floor(i / 3) * 9.3} width="7.500" height="7" rx="1.500" fill={fill} />
          ))}
        </Art>
      </Tile>
      <Tile bg="bg-linear-to-b from-[#1b8dfc] to-[#0360f0] text-white" running>
        <Peaks className="h-[17px] w-[27px]" />
      </Tile>
      <Tile bg="bg-linear-to-b from-[#33393e] to-[#0e1114]" running>
        <Art>
          <circle cx="19" cy="19" r="12.500" fill="#2b9af0" stroke="#bcc7ce" strokeWidth="4.500" />
          <circle cx="17" cy="16" r="7" fill="#7fd9fb" />
          <path d="M21 21 31 31" stroke="#bcc7ce" strokeWidth="5.500" strokeLinecap="round" />
        </Art>
      </Tile>
      <Tile bg="bg-[#f1efe9]" running>
        <Art>
          <path d="M0 0H38V10H0Z" fill="#f7cb2e" />
          <path d="M0 10.500H38M0 19H38M0 28H38" stroke="#cfccc4" />
        </Art>
      </Tile>
      <Tile bg="bg-[#c5c9c9]">
        <Art>
          <rect x="9" y="4" width="20" height="30" rx="3" fill="#2b2c2e" />
          <path d="M11 7H27V12H11Z" fill="#424549" />
          <path d="M14 16V33M19 16V33" stroke="#d5d7d9" strokeWidth="4" strokeDasharray="4 2" />
          <path d="M25 16V33" stroke="#f0992b" strokeWidth="4" strokeDasharray="4 2" />
        </Art>
      </Tile>
      <Tile bg="bg-[#f8f8f8]">
        <span className="flex h-full w-full flex-col items-center">
          <span className="w-full bg-[#e5403f] text-center text-[9px] leading-[11px] font-bold text-white">4月</span>
          <span className="text-[23px] leading-[26px] font-light text-[#222]">10</span>
        </span>
      </Tile>
      <Tile bg="bg-linear-to-b from-[#c1c8c8] to-[#7e8686]">
        <Art>
          <circle cx="19" cy="19" r="15.500" fill="#555a5b" stroke="#2e3233" strokeWidth="2" />
          <circle cx="19" cy="19" r="13.500" stroke="#9ba1a1" strokeWidth="1.500" strokeDasharray="1.500 1" />
          <circle cx="19" cy="19" r="9" fill="#7d8283" stroke="#202324" strokeWidth="2" />
          <path d="M19 19H33M19 19 12 7M19 19 12 31" stroke="#202324" strokeWidth="2.500" />
          <circle cx="19" cy="19" r="3.500" fill="#a5aaaa" stroke="#202324" />
        </Art>
      </Tile>
      <Tile bg="bg-white" running>
        <Art>
          <path d="M13 36H25V38H13Z" fill="#e24b6b" />
          <path d="M19 36H25V38H19Z" fill="#3c8fe4" />
          <svg x="4" y="6" width="30" height="26">
            <NetDisk className="h-[26px] w-[30px]" color />
          </svg>
        </Art>
      </Tile>
      <Tile bg="bg-[#1fe45e] text-[#f6fff8]" running>
        <FaWeixin className="size-[30px]" />
      </Tile>
      <Tile bg="bg-white">
        <Art>
          <path d="M28 22A11.500 10 0 1 0 13 27L10 30 17 28Q22 28.500 24 27" stroke="#2f83de" strokeWidth="3" />
          <path d="M28 21V26" stroke="#2ba24c" strokeWidth="3.500" strokeLinecap="round" />
          <path d="M23 27H27" stroke="#f5b52c" strokeWidth="3.500" strokeLinecap="round" />
          <path d="M30 28H32" stroke="#2f83de" strokeWidth="3.500" strokeLinecap="round" />
          <path d="M28 30V32" stroke="#e8502e" strokeWidth="3.500" strokeLinecap="round" />
        </Art>
      </Tile>
      <Tile bg="bg-[#dc1030] text-white" running>
        <SiNeteasecloudmusic className="size-[27px]" />
      </Tile>
      <Tile bg="bg-white" running>
        <OfficeIcon letter="O" tones={['#2186d4', '#48b5ee', '#38a3e6', '#0f65b5']} />
      </Tile>
      <Tile bg="bg-white">
        <OfficeIcon letter="W" tones={['#2f7ed8', '#3f98e8', '#2062bd', '#1a4796']} />
      </Tile>
      <Tile bg="bg-white" running>
        <OfficeIcon letter="X" tones={['#24a065', '#37c481', '#1b8350', '#155c38']} />
      </Tile>
      <Tile bg="bg-white" running>
        <Art>
          <path d="M10 7Q14 15 19 19.500 14 24 10 32" stroke="#1d7fb8" strokeWidth="4.500" />
          <path d="M28 7 24 14" stroke="#83b735" strokeWidth="4.500" />
          <path d="M24 14 18 21" stroke="#1b6b93" strokeWidth="3" />
          <path d="M23 24 28 32" stroke="#c41284" strokeWidth="4.500" />
        </Art>
      </Tile>
      <Tile bg="bg-linear-to-bl from-[#df5b36] to-[#c91d08]">
        <Art>
          <path d="M8 8 19 17.500 30 8M8 30 19 20.500 30 30" stroke="#f5ebe6" strokeWidth="3" strokeLinecap="round" />
        </Art>
      </Tile>
      <Tile bg="bg-white">
        <Art>
          <path d="M10 8H23L29 15Q22 14 18 21Z" fill="#24c99d" />
          <path d="M4 19Q12 27 20 24 26 15 34 17 32 32 18 32 5 30 4 19Z" fill="#2f62e4" />
          <path d="M20 24Q26 15 34 17 32 24 27 25 22 26 20 24Z" fill="#173a92" />
        </Art>
      </Tile>
      <Tile bg="bg-[#df0a1c] text-[15px] font-bold text-white">有道</Tile>
      <Tile bg="bg-[#930b0b]">
        <Art>
          <path d="M19 8Q23 8 20 16 16 26 9 30 4 31 8 26 17 21 29 23 35 26 29 27 20 23 17 11 17 8 19 8Z" stroke="#fff" strokeWidth="2" />
        </Art>
      </Tile>
      <Tile bg="bg-white">
        <Art>
          <circle cx="20" cy="19" r="13" fill="#e35b3f" />
          <path d="M20 6A13 13 0 0 1 33 19H20Z" fill="#f5907a" />
          <path d="M7 19H33A13 13 0 0 1 20 32 13 13 0 0 1 7 19" fill="#cc4028" />
          <rect x="4" y="12" width="14" height="14" rx="1.500" fill="#b8361f" />
          <text x="11" y="23" textAnchor="middle" fill="#fff" className="text-[11px] font-semibold">
            P
          </text>
        </Art>
      </Tile>
      <button aria-label="文本编辑" className="flex w-[49px] shrink-0 justify-center">
        <Art>
          <rect width="38" height="38" rx="9" fill="#f9f9f7" />
          <path d="M0 6H38M0 11.500H38M0 17H38M0 22.500H38M0 28H38M0 33.500H38" stroke="#d5d6dc" strokeWidth=".8" />
          <path d="M7 0V38" stroke="#e2a4a4" strokeWidth=".8" />
          <path d="M36-2 19 31 15 40" stroke="#76838c" strokeWidth="3.500" />
          <path d="M35.500-2 19 30" stroke="#c9d3d9" strokeWidth="1.200" />
        </Art>
      </button>
      <Tile bg="bg-black">
        <Art>
          <path d="M32 12 8 24V26Q8 28 10 28H24Q27 28 27 25M32 26 8 14V12Q8 10 10 10H24Q27 10 27 13" stroke="#fff" strokeWidth="3" />
        </Art>
      </Tile>
      <DockDivider />
      <Tile bg="bg-white" running>
        <Art>
          <path d="M8 8Q10 6 13 8L31 17Q34 19 31 21L13 31Q10 32 8 30Z" fill="#2287f2" />
          <path d="M6 10Q7 8 10 9L23 17Q26 19 23 21L10 30Q7 31 6 28Z" fill="#f58a1f" />
          <path d="M10 10 26 19 10 29Z" fill="#52d236" stroke="#52d236" strokeWidth="3" strokeLinejoin="round" />
          <path d="M14 14V24L22 19Z" fill="#fff" />
        </Art>
      </Tile>
      <Tile bg="bg-white" running>
        <Art>
          <path d="M13 36H25V38H13Z" fill="#e24b6b" />
          <path d="M19 36H25V38H19Z" fill="#3c8fe4" />
          <svg x="4" y="6" width="30" height="26">
            <NetDisk className="h-[26px] w-[30px]" color />
          </svg>
        </Art>
      </Tile>
      <Tile bg="bg-linear-to-b from-[#f2476c] to-[#e2213f]" running>
        <Art>
          <path d="M14 28V12L27 9V25" stroke="#fff" strokeWidth="2" />
          <path d="M14 12 27 9V13L14 16Z" fill="#fff" />
          <ellipse cx="11.500" cy="28" rx="3.500" ry="3" fill="#fff" />
          <ellipse cx="24.500" cy="25.500" rx="3.500" ry="3" fill="#fff" />
        </Art>
      </Tile>
      <button aria-label="解压" className="flex w-[49px] shrink-0 flex-col items-center gap-1">
        <svg viewBox="-1 0 46 38" className="h-[38px] w-[46px] overflow-visible" fill="none">
          <Books />
        </svg>
        <span className="size-1 rounded-full bg-[#0d1615]" />
      </button>
      <Tile bg="bg-white" running>
        <Art>
          <path d="M7 12 13.500 27 20 13" stroke="#d8302a" strokeWidth="4" strokeLinejoin="round" />
          <path d="M16 12 22.500 27 31 10" stroke="#bf2a22" strokeWidth="4" strokeLinejoin="round" />
          <path d="M5 12H12M14 12H25" stroke="#e5572e" strokeWidth="3.500" />
        </Art>
      </Tile>
      <DockDivider />
      <button aria-label="DOCZIP" className="-mt-0.5 flex w-[49px] shrink-0 justify-center">
        <svg viewBox="0 0 35 45" className="h-[45px] w-[35px]" fill="none">
          <path d="M0 4 3 1H10L12 3H32L35 6V45H0Z" fill="#f3f5f4" />
          <path d="M29 5V20" stroke="#c5c9c7" strokeWidth="3" strokeDasharray="2 2" />
          <g transform="translate(7 18) scale(.48)">
            <Books />
          </g>
          <text x="17.500" y="43" textAnchor="middle" fill="#777" className="text-[5px]">
            DOCZIP
          </text>
        </svg>
      </button>
      <button aria-label="废纸篓" className="-mt-1 flex w-[49px] shrink-0 justify-center">
        <svg viewBox="0 0 34 45" className="h-[45px] w-[34px]" fill="none">
          <path d="M1 4H33L29 41Q28 45 17 45T5 41Z" fill="#d8dddb" />
          <path d="M5 9H29L26 39Q17 43 8 39Z" fill="#c5cbc9" />
          <ellipse cx="17" cy="5" rx="16" ry="4" fill="#5d6b66" stroke="#eef1f0" />
          <path d="M6 6 11 1 14 6 19 0 22 5 27 2 28 7Z" fill="#f1f3f2" stroke="#8a9491" strokeWidth=".6" />
          <path d="M9 16Q15 20 12 30M25 15Q19 24 23 34" stroke="#ced4d2" strokeWidth="2" />
        </svg>
      </button>
    </footer>
  );
}

export default function App() {
  return (
    <div className="relative flex h-screen flex-col overflow-hidden bg-linear-to-r from-[#2a4550] via-[#1f5b5a] via-60% to-[#083323]">
      {/* rippled water along the bottom of the desktop */}
      <svg className="absolute bottom-0 left-0 h-16 w-full opacity-60">
        <filter id="water">
          <feTurbulence type="fractalNoise" baseFrequency="0.05 0.3" numOctaves="3" seed="4" />
          <feColorMatrix values="0 0 0 0 .6  0 0 0 0 .75  0 0 0 0 .72  0 3 0 0 -1.4" />
        </filter>
        <rect width="100%" height="100%" filter="url(#water)" />
      </svg>
      <MenuBar />
      <div className="relative flex min-h-0 flex-1 flex-col overflow-hidden">
        <div
          className={`flex h-[30px] shrink-0 items-center justify-center gap-1.5 border-y border-[#c0c3bf] bg-[#ecedeb] pr-1.5 text-[13px] font-bold text-[#444744] ${SYSTEM}`}
        >
          <svg viewBox="0 0 14 14" className="size-3.5">
            <path d="M1 0H9L13 4V14H1Z" fill="#fafafa" stroke="#dcdddb" strokeWidth=".6" />
            <path d="M9 0V4H13Z" fill="#d9dad8" />
          </svg>
          <h1 className="whitespace-pre">video - Axure RP 9 Enterprise Edition  已授权给：honeyxiu</h1>
        </div>
        <Toolbar />
        <div className="flex min-h-0 flex-1">
          <LeftPanel />
          <Workspace />
          <RightPanel />
        </div>
        <div className="pointer-events-none absolute inset-x-0 bottom-0 h-9 bg-linear-to-b from-transparent to-black/15" />
      </div>
      <Dock />
    </div>
  );
}
